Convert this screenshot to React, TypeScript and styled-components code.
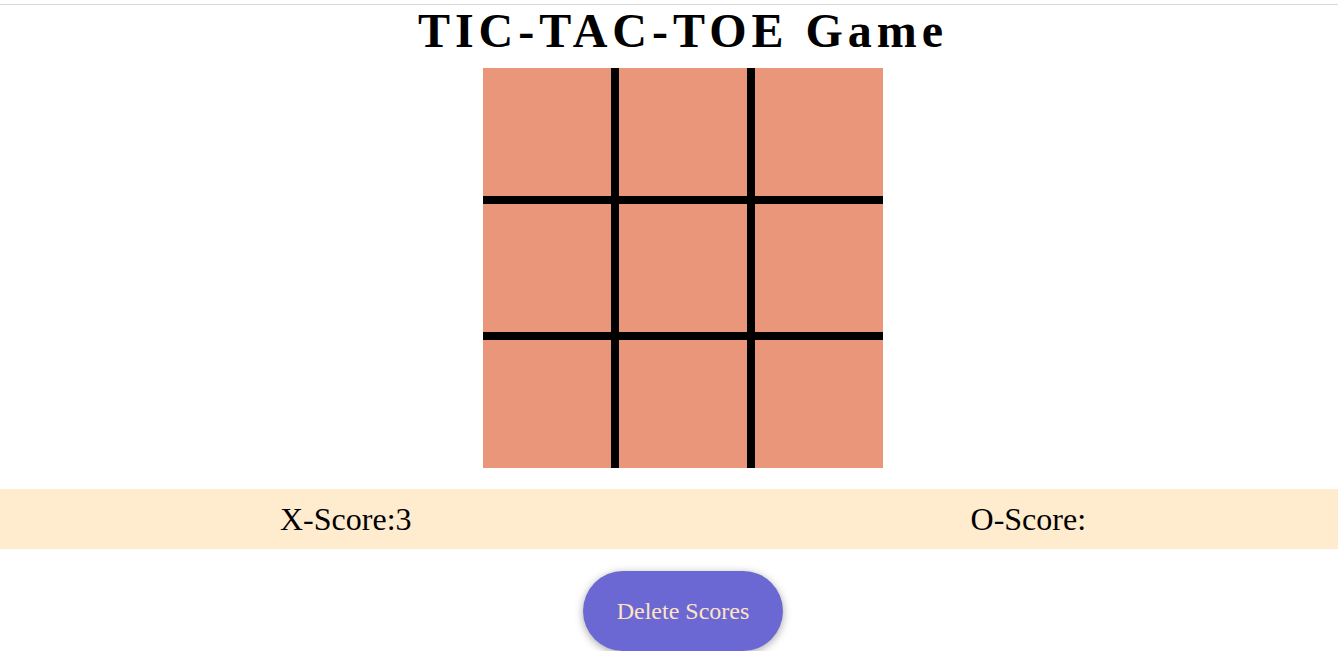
import React from "react";
import styled, { createGlobalStyle } from "styled-components";

const Global = createGlobalStyle`
  html, body { margin: 0; padding: 0; background: #fff; }
  body { font-family: "Liberation Serif", "Times New Roman", serif; }
`;

const Page = styled.div`
  display: flex;
  flex-direction: column;
`;

const TopRule = styled.div`
  height: 1px;
  margin-top: 4px;
  background: #d9d9d9;
`;

const Centered = styled.div<{ $top: number }>`
  display: flex;
  flex-direction: column;
  align-items: center;
  padding-left: 28px;
  margin-top: ${(p) => p.$top}px;
`;

const Title = styled.h1`
  margin: 0;
  font-size: 48px;
  line-height: 51px;
  font-weight: bold;
  letter-spacing: 5px;
  color: #000;
  text-align: center;
`;

const Board = styled.div`
  margin-top: 12px;
  width: 400px;
  height: 400px;
  display: grid;
  grid-template-columns: repeat(3, 128px);
  grid-template-rows: repeat(3, 128px);
  gap: 8px;
  background: #000;
`;

const Cell = styled.div`
  background: #e9967a;
`;

const ScoreBar = styled.div`
  margin-top: 21px;
  height: 60px;
  background: #ffebcd;
  display: flex;
  align-items: center;
  font-size: 32px;
  color: #000;
`;

const Score = styled.span<{ $left: number }>`
  margin-left: ${(p) => p.$left}px;
`;

const DeleteButton = styled.button`
  width: 200px;
  height: 80px;
  border: none;
  border-radius: 40px;
  background: #6b68d3;
  color: #ffe4c4;
  font-family: "Liberation Serif", "Times New Roman", serif;
  font-size: 24px;
  box-shadow: 0 2px 8px rgba(0, 0, 0, 0.35);
  cursor: pointer;
`;

export default function App() {
  return (
    <>
      <Global />
      <Page>
        <TopRule />
        <Centered $top={0}>
          <Title>TIC-TAC-TOE Game</Title>
          <Board>
            {Array.from({ length: 9 }).map((_, i) => (
              <Cell key={i} />
            ))}
          </Board>
        </Centered>
        <ScoreBar>
          <Score $left={280}>X-Score:3</Score>
          <Score $left={559}>O-Score:</Score>
        </ScoreBar>
        <Centered $top={22}>
          <DeleteButton>Delete Scores</DeleteButton>
        </Centered>
      </Page>
    </>
  );
}
